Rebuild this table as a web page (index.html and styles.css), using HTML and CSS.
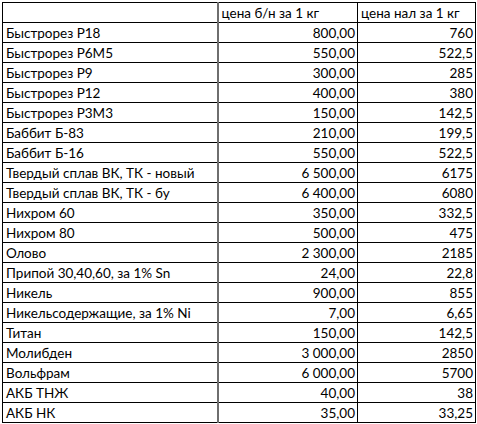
FILE: index.html
```html
<!DOCTYPE html>
<html lang="ru">
<head>
<meta charset="utf-8">
<title>Цены</title>
<link rel="stylesheet" href="styles.css">
</head>
<body>
<table class="sheet">
  <colgroup>
    <col class="c-name">
    <col class="c-bn">
    <col class="c-nal">
  </colgroup>
  <tr class="head"><td class="name"></td><td class="htext">цена б/н за 1 кг</td><td class="htext">цена нал за 1 кг</td></tr>
  <tr><td class="name">Быстрорез Р18</td><td class="num">800,00</td><td class="num">760</td></tr>
  <tr><td class="name">Быстрорез Р6М5</td><td class="num">550,00</td><td class="num">522,5</td></tr>
  <tr><td class="name">Быстрорез Р9</td><td class="num">300,00</td><td class="num">285</td></tr>
  <tr><td class="name">Быстрорез Р12</td><td class="num">400,00</td><td class="num">380</td></tr>
  <tr><td class="name">Быстрорез Р3М3</td><td class="num">150,00</td><td class="num">142,5</td></tr>
  <tr><td class="name">Баббит Б-83</td><td class="num">210,00</td><td class="num">199,5</td></tr>
  <tr><td class="name">Баббит Б-16</td><td class="num">550,00</td><td class="num">522,5</td></tr>
  <tr><td class="name">Твердый сплав ВК, ТК - новый</td><td class="num">6 500,00</td><td class="num">6175</td></tr>
  <tr><td class="name">Твердый сплав ВК, ТК - бу</td><td class="num">6 400,00</td><td class="num">6080</td></tr>
  <tr><td class="name">Нихром 60</td><td class="num">350,00</td><td class="num">332,5</td></tr>
  <tr><td class="name">Нихром 80</td><td class="num">500,00</td><td class="num">475</td></tr>
  <tr><td class="name">Олово</td><td class="num">2 300,00</td><td class="num">2185</td></tr>
  <tr><td class="name">Припой 30,40,60, за 1% Sn</td><td class="num">24,00</td><td class="num">22,8</td></tr>
  <tr><td class="name">Никель</td><td class="num">900,00</td><td class="num">855</td></tr>
  <tr><td class="name">Никельсодержащие, за 1% Ni</td><td class="num">7,00</td><td class="num">6,65</td></tr>
  <tr><td class="name">Титан</td><td class="num">150,00</td><td class="num">142,5</td></tr>
  <tr><td class="name">Молибден</td><td class="num">3 000,00</td><td class="num">2850</td></tr>
  <tr><td class="name">Вольфрам</td><td class="num">6 000,00</td><td class="num">5700</td></tr>
  <tr><td class="name">АКБ ТНЖ</td><td class="num">40,00</td><td class="num">38</td></tr>
  <tr><td class="name">АКБ НК</td><td class="num">35,00</td><td class="num">33,25</td></tr>
</table>
</body>
</html>
```
FILE: styles.css
```css
html, body {
  margin: 0;
  padding: 0;
  background: #ffffff;
}
body {
  padding: 2px 0 0 2px;
  font-family: Lato, "Open Sans", "Liberation Sans", sans-serif;
  font-size: 13.5px;
  color: #000;
}
.sheet {
  border-collapse: collapse;
  table-layout: fixed;
  width: 473px;
}
.c-name { width: 215px; }
.c-bn { width: 140px; }
.c-nal { width: 118px; }
.sheet tr {
  height: 20px;
}
.sheet td {
  border: 1px solid #000;
  padding: 0 2px 1px 3px;
  vertical-align: bottom;
  line-height: 15px;
  white-space: nowrap;
  overflow: hidden;
}
.sheet td.name {
  border-right: 2px solid #6e6e6e;
}
.sheet td.num {
  text-align: right;
}
.sheet td.htext {
  text-align: left;
}
```
